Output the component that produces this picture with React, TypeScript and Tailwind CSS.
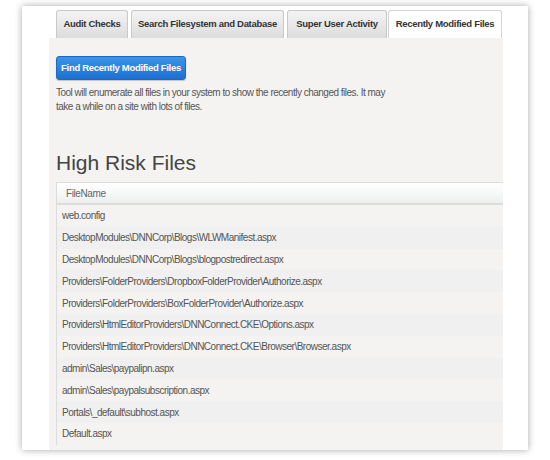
import React from "react";

const files = [
  "web.config",
  "DesktopModules\\DNNCorp\\Blogs\\WLWManifest.aspx",
  "DesktopModules\\DNNCorp\\Blogs\\blogpostredirect.aspx",
  "Providers\\FolderProviders\\DropboxFolderProvider\\Authorize.aspx",
  "Providers\\FolderProviders\\BoxFolderProvider\\Authorize.aspx",
  "Providers\\HtmlEditorProviders\\DNNConnect.CKE\\Options.aspx",
  "Providers\\HtmlEditorProviders\\DNNConnect.CKE\\Browser\\Browser.aspx",
  "admin\\Sales\\paypalipn.aspx",
  "admin\\Sales\\paypalsubscription.aspx",
  "Portals\\_default\\subhost.aspx",
  "Default.aspx",
];

const tabBase =
  "h-[28px] flex items-center justify-center whitespace-nowrap rounded-t-[3px] border border-b-0 text-[9.5px] tracking-[-0.3px] font-bold text-[#333]";
const tabIdle = "border-[#c9c9c9] bg-gradient-to-b from-[#f4f4f4] to-[#dcdcdc]";

export default function App() {
  return (
    <div className="w-[550px] h-[460px] bg-white pt-[6px] pl-[22px] font-['Liberation_Sans',Arial,sans-serif]">
      <div className="w-[506px] h-[444px] bg-white shadow-[0_0_7px_rgba(0,0,0,0.35)] pl-[27px] pr-[25px] flex flex-col overflow-hidden">
        <div className="flex items-end gap-[3px] pt-[4px] pl-[7px] h-[32px]">
          <div className={`${tabBase} ${tabIdle} w-[72px]`}>Audit Checks</div>
          <div className={`${tabBase} ${tabIdle} w-[153px]`}>Search Filesystem and Database</div>
          <div className={`${tabBase} ${tabIdle} w-[100px]`}>Super User Activity</div>
          <div className={`${tabBase} -ml-[2px] w-[114px] border-[#d4d4d4] bg-white`}>Recently Modified Files</div>
        </div>
        <div className="flex-1 bg-[#f4f3f1] pl-[7px] pt-[18px] flex flex-col">
          <button className="self-start w-[130px] h-[24px] whitespace-nowrap rounded-[3px] border border-[#1f67c0] bg-gradient-to-b from-[#3a95e8] to-[#1b70d2] text-white text-[9.5px] tracking-[-0.3px] font-bold shadow-[0_1px_1px_rgba(0,0,0,0.2)]">
            Find Recently Modified Files
          </button>
          <p className="mt-[6px] text-[10px] leading-[14px] tracking-[-0.5px] text-[#555] whitespace-nowrap">
            Tool will enumerate all files in your system to show the recently changed files. It may
            <br />
            take a while on a site with lots of files.
          </p>
          <h2 className="mt-[36px] text-[21px] leading-[26px] text-[#444] font-normal">High Risk Files</h2>
          <div className="mt-[6px] border-l border-[#dcdcdc] flex flex-col">
            <div className="h-[23px] border-t border-b-2 border-[#dedcda] bg-gradient-to-b from-white to-[#eef0f0] flex items-center pl-[9px] text-[10px] tracking-[-0.4px] text-[#666]">
              FileName
            </div>
            {files.map((f, i) => (
              <div
                key={f}
                className={`h-[21.8px] flex items-center pl-[5px] text-[10px] tracking-[-0.5px] text-[#555] whitespace-nowrap ${i % 2 === 0 ? "bg-[#f4f3f1]" : "bg-[#f0f0f0]"}`}
              >
                {f}
              </div>
            ))}
          </div>
        </div>
      </div>
    </div>
  );
}
